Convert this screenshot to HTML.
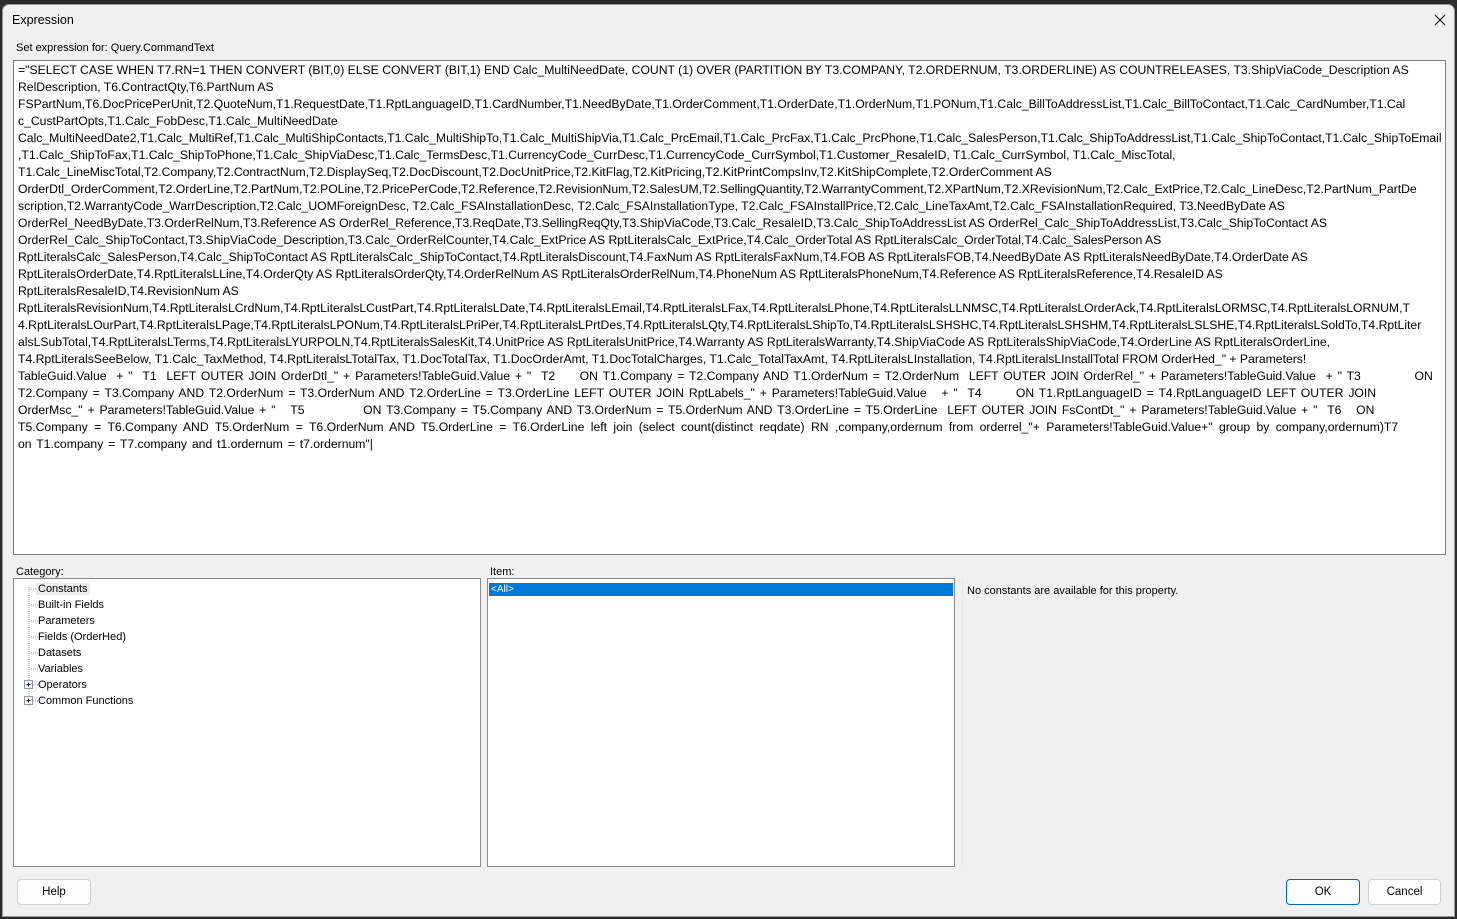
<!DOCTYPE html>
<html><head><meta charset="utf-8"><style>
body{margin:0;width:1457px;height:919px;background:#2b2b2b;overflow:hidden;font-family:"Liberation Sans",sans-serif;font-size:12px;color:#000;position:relative}
#win{position:absolute;left:2px;top:4px;width:1453px;height:913px;background:#f0f0f0;border:1px solid #9a9a9a;border-radius:7px 7px 0 0;box-sizing:border-box}
.abs{position:absolute}
#ta{position:absolute;left:10px;top:55px;width:1433px;height:495px;background:#fff;border:1px solid #7a7a7a;box-sizing:border-box;padding:1px 0 0 4px;font-size:12.2px;line-height:17px;white-space:nowrap;overflow:hidden}
.box{position:absolute;background:#fff;border:1px solid #8a8a8a;box-sizing:border-box}
.tree div{height:16px;line-height:16px;position:relative;padding-left:24px;font-size:11px}
.btn{position:absolute;background:#fdfdfd;border:1px solid #d0d0d0;border-radius:4px;box-sizing:border-box;text-align:center;line-height:24px;font-size:11.5px}
</style></head><body>
<div id="win">
<div class="abs" style="left:9px;top:8px;font-size:12.5px">Expression</div>
<svg class="abs" style="left:1431px;top:9px" width="12" height="12"><path d="M1 1L11 11M11 1L1 11" stroke="#222" stroke-width="1.2"/></svg>
<div class="abs" style="left:13px;top:37px;font-size:11px">Set expression for: Query.CommandText</div>
<div id="ta">
<div>="SELECT CASE WHEN T7.RN=1 THEN CONVERT (BIT,0) ELSE CONVERT (BIT,1) END Calc_MultiNeedDate, COUNT (1) OVER (PARTITION BY T3.COMPANY, T2.ORDERNUM, T3.ORDERLINE) AS COUNTRELEASES, T3.ShipViaCode_Description AS</div>
<div>RelDescription, T6.ContractQty,T6.PartNum AS</div>
<div>FSPartNum,T6.DocPricePerUnit,T2.QuoteNum,T1.RequestDate,T1.RptLanguageID,T1.CardNumber,T1.NeedByDate,T1.OrderComment,T1.OrderDate,T1.OrderNum,T1.PONum,T1.Calc_BillToAddressList,T1.Calc_BillToContact,T1.Calc_CardNumber,T1.Cal</div>
<div>c_CustPartOpts,T1.Calc_FobDesc,T1.Calc_MultiNeedDate</div>
<div>Calc_MultiNeedDate2,T1.Calc_MultiRef,T1.Calc_MultiShipContacts,T1.Calc_MultiShipTo,T1.Calc_MultiShipVia,T1.Calc_PrcEmail,T1.Calc_PrcFax,T1.Calc_PrcPhone,T1.Calc_SalesPerson,T1.Calc_ShipToAddressList,T1.Calc_ShipToContact,T1.Calc_ShipToEmail</div>
<div>,T1.Calc_ShipToFax,T1.Calc_ShipToPhone,T1.Calc_ShipViaDesc,T1.Calc_TermsDesc,T1.CurrencyCode_CurrDesc,T1.CurrencyCode_CurrSymbol,T1.Customer_ResaleID, T1.Calc_CurrSymbol, T1.Calc_MiscTotal,</div>
<div>T1.Calc_LineMiscTotal,T2.Company,T2.ContractNum,T2.DisplaySeq,T2.DocDiscount,T2.DocUnitPrice,T2.KitFlag,T2.KitPricing,T2.KitPrintCompsInv,T2.KitShipComplete,T2.OrderComment AS</div>
<div>OrderDtl_OrderComment,T2.OrderLine,T2.PartNum,T2.POLine,T2.PricePerCode,T2.Reference,T2.RevisionNum,T2.SalesUM,T2.SellingQuantity,T2.WarrantyComment,T2.XPartNum,T2.XRevisionNum,T2.Calc_ExtPrice,T2.Calc_LineDesc,T2.PartNum_PartDe</div>
<div>scription,T2.WarrantyCode_WarrDescription,T2.Calc_UOMForeignDesc, T2.Calc_FSAInstallationDesc, T2.Calc_FSAInstallationType, T2.Calc_FSAInstallPrice,T2.Calc_LineTaxAmt,T2.Calc_FSAInstallationRequired, T3.NeedByDate AS</div>
<div>OrderRel_NeedByDate,T3.OrderRelNum,T3.Reference AS OrderRel_Reference,T3.ReqDate,T3.SellingReqQty,T3.ShipViaCode,T3.Calc_ResaleID,T3.Calc_ShipToAddressList AS OrderRel_Calc_ShipToAddressList,T3.Calc_ShipToContact AS</div>
<div>OrderRel_Calc_ShipToContact,T3.ShipViaCode_Description,T3.Calc_OrderRelCounter,T4.Calc_ExtPrice AS RptLiteralsCalc_ExtPrice,T4.Calc_OrderTotal AS RptLiteralsCalc_OrderTotal,T4.Calc_SalesPerson AS</div>
<div>RptLiteralsCalc_SalesPerson,T4.Calc_ShipToContact AS RptLiteralsCalc_ShipToContact,T4.RptLiteralsDiscount,T4.FaxNum AS RptLiteralsFaxNum,T4.FOB AS RptLiteralsFOB,T4.NeedByDate AS RptLiteralsNeedByDate,T4.OrderDate AS</div>
<div>RptLiteralsOrderDate,T4.RptLiteralsLLine,T4.OrderQty AS RptLiteralsOrderQty,T4.OrderRelNum AS RptLiteralsOrderRelNum,T4.PhoneNum AS RptLiteralsPhoneNum,T4.Reference AS RptLiteralsReference,T4.ResaleID AS</div>
<div>RptLiteralsResaleID,T4.RevisionNum AS</div>
<div>RptLiteralsRevisionNum,T4.RptLiteralsLCrdNum,T4.RptLiteralsLCustPart,T4.RptLiteralsLDate,T4.RptLiteralsLEmail,T4.RptLiteralsLFax,T4.RptLiteralsLPhone,T4.RptLiteralsLLNMSC,T4.RptLiteralsLOrderAck,T4.RptLiteralsLORMSC,T4.RptLiteralsLORNUM,T</div>
<div>4.RptLiteralsLOurPart,T4.RptLiteralsLPage,T4.RptLiteralsLPONum,T4.RptLiteralsLPriPer,T4.RptLiteralsLPrtDes,T4.RptLiteralsLQty,T4.RptLiteralsLShipTo,T4.RptLiteralsLSHSHC,T4.RptLiteralsLSHSHM,T4.RptLiteralsLSLSHE,T4.RptLiteralsLSoldTo,T4.RptLiter</div>
<div>alsLSubTotal,T4.RptLiteralsLTerms,T4.RptLiteralsLYURPOLN,T4.RptLiteralsSalesKit,T4.UnitPrice AS RptLiteralsUnitPrice,T4.Warranty AS RptLiteralsWarranty,T4.ShipViaCode AS RptLiteralsShipViaCode,T4.OrderLine AS RptLiteralsOrderLine,</div>
<div>T4.RptLiteralsSeeBelow, T1.Calc_TaxMethod, T4.RptLiteralsLTotalTax, T1.DocTotalTax, T1.DocOrderAmt, T1.DocTotalCharges, T1.Calc_TotalTaxAmt, T4.RptLiteralsLInstallation, T4.RptLiteralsLInstallTotal FROM OrderHed_" + Parameters!</div>
<div style="word-spacing:1.5px">TableGuid.Value &nbsp;+ " &nbsp;T1 &nbsp;LEFT OUTER JOIN OrderDtl_" + Parameters!TableGuid.Value + " &nbsp;T2 &nbsp;&nbsp;&nbsp;&nbsp;ON T1.Company = T2.Company AND T1.OrderNum = T2.OrderNum &nbsp;LEFT OUTER JOIN OrderRel_" + Parameters!TableGuid.Value &nbsp;+ " T3 &nbsp;&nbsp;&nbsp;&nbsp;&nbsp;&nbsp;&nbsp;&nbsp;&nbsp;&nbsp;ON</div>
<div style="word-spacing:1.5px">T2.Company = T3.Company AND T2.OrderNum = T3.OrderNum AND T2.OrderLine = T3.OrderLine LEFT OUTER JOIN RptLabels_" + Parameters!TableGuid.Value &nbsp;&nbsp;+ " &nbsp;T4 &nbsp;&nbsp;&nbsp;&nbsp;&nbsp;&nbsp;ON T1.RptLanguageID = T4.RptLanguageID LEFT OUTER JOIN</div>
<div style="word-spacing:1.5px">OrderMsc_" + Parameters!TableGuid.Value + " &nbsp;&nbsp;T5 &nbsp;&nbsp;&nbsp;&nbsp;&nbsp;&nbsp;&nbsp;&nbsp;&nbsp;&nbsp;&nbsp;ON T3.Company = T5.Company AND T3.OrderNum = T5.OrderNum AND T3.OrderLine = T5.OrderLine &nbsp;LEFT OUTER JOIN FsContDt_" + Parameters!TableGuid.Value + " &nbsp;T6 &nbsp;&nbsp;ON</div>
<div style="word-spacing:3px">T5.Company = T6.Company AND T5.OrderNum = T6.OrderNum AND T5.OrderLine = T6.OrderLine left join (select count(distinct reqdate) RN ,company,ordernum from orderrel_"+ Parameters!TableGuid.Value+" group by company,ordernum)T7</div>
<div style="word-spacing:1.5px">on T1.company = T7.company and t1.ordernum = t7.ordernum"|</div>
</div>
<div class="abs" style="left:13px;top:561px;font-size:11px">Category:</div>
<div class="abs" style="left:487px;top:561px;font-size:11px">Item:</div>
<div class="box tree" style="left:10px;top:573px;width:468px;height:289px;padding-top:2px">
<svg class="abs" style="left:0;top:0" width="40" height="140"><path d="M15 8V128" stroke="#a0a0a0" stroke-dasharray="1 1"/><g stroke="#a0a0a0" stroke-dasharray="1 1"><path d="M15 10H24M15 26H24M15 42H24M15 58H24M15 74H24M15 90H24M15 106H24M15 122H24"/></g>
<rect x="10.5" y="101.5" width="8" height="8" fill="#fff" stroke="#8a9ab0"/><path d="M12.5 105.5H16.5M14.5 103.5V107.5" stroke="#223"/>
<rect x="10.5" y="117.5" width="8" height="8" fill="#fff" stroke="#8a9ab0"/><path d="M12.5 121.5H16.5M14.5 119.5V123.5" stroke="#223"/></svg>
<div><span style="background:#ececec;padding:0 2px;margin-left:-2px">Constants</span></div><div>Built-in Fields</div><div>Parameters</div><div>Fields (OrderHed)</div><div>Datasets</div><div>Variables</div><div>Operators</div><div>Common Functions</div>
</div>
<div class="box" style="left:484px;top:573px;width:468px;height:289px">
<div style="margin:4px 1px 0 1px;background:#0078d7;color:#fff;font-size:10px;height:13px;line-height:13px;padding-left:2px">&lt;All&gt;</div>
</div>
<div class="abs" style="left:959px;top:575px;width:483px;height:287px;background:#f0f0f0;border-left:1px solid #e6e6e6"></div>
<div class="abs" style="left:964px;top:580px;font-size:11px">No constants are available for this property.</div>
<div class="btn" style="left:14px;top:874px;width:74px;height:26px">Help</div>
<div class="btn" style="left:1283px;top:874px;width:74px;height:26px;border:1px solid #0067c0">OK</div>
<div class="btn" style="left:1365px;top:874px;width:73px;height:26px">Cancel</div>
</div>
</body></html>
